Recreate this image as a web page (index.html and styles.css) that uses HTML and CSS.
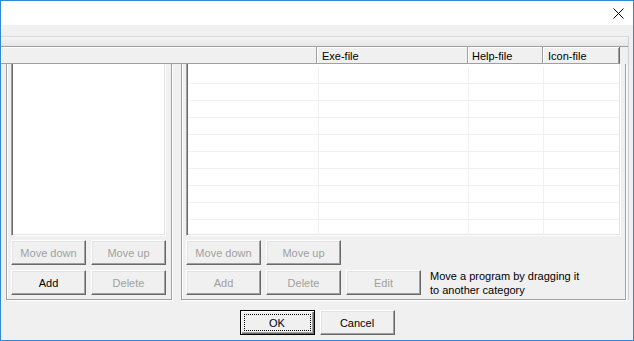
FILE: index.html
```html
<!DOCTYPE html>
<html lang="en">
<head>
  <meta charset="UTF-8" />
  <title>Programs</title>
  <link rel="stylesheet" href="styles.css">
</head>
<body>

<div class="window">
  <div class="titlebar">
    <svg class="close" viewBox="0 0 11 11" width="11" height="11">
      <path d="M0.5 0.5L10.5 10.5M10.5 0.5L0.5 10.5" stroke="#000" stroke-width="1" fill="none" />
    </svg>
  </div>

  <div class="client">
    <div class="frame">
      <div class="strip"></div>
      <div class="header">
        <div class="hcell c-name"></div>
        <div class="hcell c-exe">Exe-file</div>
        <div class="hcell c-help">Help-file</div>
        <div class="hcell c-icon">Icon-file</div>
      </div>

      <div class="panels">
        <div class="group group-left">
          <div class="listbox"></div>
          <div class="btn-grid">
            <button class="btn disabled">Move down</button>
            <button class="btn disabled">Move up</button>
            <button class="btn">Add</button>
            <button class="btn disabled">Delete</button>
          </div>
        </div>

        <div class="group group-right">
          <div class="listview">
            <div class="row"><div class="cell c1"></div><div class="cell c2"></div><div class="cell c3"></div><div class="cell c4"></div></div>
            <div class="row"><div class="cell c1"></div><div class="cell c2"></div><div class="cell c3"></div><div class="cell c4"></div></div>
            <div class="row"><div class="cell c1"></div><div class="cell c2"></div><div class="cell c3"></div><div class="cell c4"></div></div>
            <div class="row"><div class="cell c1"></div><div class="cell c2"></div><div class="cell c3"></div><div class="cell c4"></div></div>
            <div class="row"><div class="cell c1"></div><div class="cell c2"></div><div class="cell c3"></div><div class="cell c4"></div></div>
            <div class="row"><div class="cell c1"></div><div class="cell c2"></div><div class="cell c3"></div><div class="cell c4"></div></div>
            <div class="row"><div class="cell c1"></div><div class="cell c2"></div><div class="cell c3"></div><div class="cell c4"></div></div>
            <div class="row"><div class="cell c1"></div><div class="cell c2"></div><div class="cell c3"></div><div class="cell c4"></div></div>
            <div class="row"><div class="cell c1"></div><div class="cell c2"></div><div class="cell c3"></div><div class="cell c4"></div></div>
            <div class="row"><div class="cell c1"></div><div class="cell c2"></div><div class="cell c3"></div><div class="cell c4"></div></div>
          </div>
          <div class="btn-rows">
            <div class="btn-row">
              <button class="btn disabled">Move down</button>
              <button class="btn disabled">Move up</button>
            </div>
            <div class="btn-row">
              <button class="btn disabled">Add</button>
              <button class="btn disabled">Delete</button>
              <button class="btn disabled">Edit</button>
              <div class="hint">Move a program by dragging it<br>to another category</div>
            </div>
          </div>
        </div>
      </div>
    </div>

    <div class="footer">
      <button class="btn default"><span class="focus">OK</span></button>
      <button class="btn">Cancel</button>
    </div>
  </div>
</div>

</body>
</html>
```

FILE: styles.css
```css
body {
  margin: 0;
  font-family: 'Liberation Sans', Arial, sans-serif;
  font-size: 11px;
  background: #f0f0f0;
}
.window {
  width: 634px;
  height: 341px;
  box-sizing: border-box;
  border: 1px solid #2e8ad8;
  background: #f0f0f0;
  display: flex;
  flex-direction: column;
  overflow: hidden;
}
.titlebar {
  height: 24px;
  box-sizing: border-box;
  background: #fff;
  display: flex;
  justify-content: flex-end;
  padding: 7px 9px 0 0;
}
.close {
  display: block;
}
.client {
  flex: 1;
  display: flex;
  flex-direction: column;
}
.frame {
  margin-top: 11px;
  width: 628px;
  box-sizing: border-box;
  border-top: 1px solid #dadada;
  border-right: 1px solid #d0d0d0;
}
.strip {
  height: 9px;
  background: linear-gradient(#f4f4f4, #e6e6e6);
}
.header {
  display: flex;
  height: 18px;
  box-sizing: border-box;
  border-top: 1px solid #a0a0a0;
}
.hcell {
  height: 17px;
  box-sizing: border-box;
  background: #f0f0f0;
  border-right: 1px solid #a0a0a0;
  border-bottom: 1px solid #a0a0a0;
  box-shadow: inset 1px 1px #fff;
  padding: 2px 0 0 5px;
  line-height: 14px;
  color: #000;
}
.c-name { width: 316px; }
.c-exe { width: 151px; }
.c-help { width: 75px; padding-left: 4px; }
.c-icon {
  width: 77px;
  border-right-color: #696969;
  box-shadow: inset 1px 1px #fff, inset -1px 0 #a0a0a0;
}
.panels {
  display: flex;
}
.group {
  box-sizing: border-box;
  border: 1px solid #a0a0a0;
  border-top: none;
  box-shadow: 1px 1px 0 #fff, inset 1px 0 #fff;
}
.group-left {
  margin-left: 5px;
  width: 166px;
  padding: 0 5px 4px 4px;
}
.group-right {
  margin-left: 9px;
  width: 445px;
  padding: 0 4px 4px 4px;
}
.listbox,
.listview {
  height: 172px;
  box-sizing: border-box;
  background: #fff;
  border-left: 1px solid #a0a0a0;
  border-right: 1px solid #fff;
  border-bottom: 1px solid #fff;
  box-shadow: inset 1px 0 #696969, inset -1px -1px #e3e3e3;
}
.listview {
  padding: 3px 1px 1px 1px;
  overflow: hidden;
}
.row {
  display: flex;
  height: 17px;
  flex-shrink: 0;
  box-sizing: border-box;
  border-bottom: 1px solid #f0f0f0;
}
.cell {
  box-sizing: border-box;
  border-right: 1px solid #f0f0f0;
}
.c1 { width: 131px; }
.c2 { width: 150px; }
.c3 { width: 75px; }
.c4 { flex: 1; border-right: none; }
.btn-grid {
  display: grid;
  grid-template-columns: 75px 75px;
  gap: 5px;
  margin-top: 4px;
}
.btn-rows {
  display: flex;
  flex-direction: column;
  gap: 5px;
  margin-top: 4px;
}
.btn-row {
  display: flex;
  gap: 5px;
  align-items: flex-start;
}
.btn {
  width: 75px;
  height: 25px;
  margin: 0;
  padding: 0;
  box-sizing: border-box;
  font-family: inherit;
  font-size: 11px;
  color: #000;
  background: #f0f0f0;
  border: 1px solid;
  border-color: #fff #696969 #696969 #fff;
  box-shadow: inset -1px -1px #a0a0a0, inset 1px 1px #e3e3e3;
  display: flex;
  align-items: center;
  justify-content: center;
}
.btn.disabled {
  color: #a0a0a0;
}
.btn.default {
  border-color: #000;
  box-shadow: inset 1px 1px #fff, inset -1px -1px #696969, inset -2px -2px #a0a0a0;
  padding: 3px;
}
.focus {
  flex: 1;
  align-self: stretch;
  display: flex;
  align-items: center;
  justify-content: center;
  border: 1px dotted #000;
}
.hint {
  margin: -1px 0 -3px 4px;
  line-height: 14px;
  color: #000;
}
.footer {
  display: flex;
  justify-content: center;
  gap: 5px;
  margin-top: 10px;
}
```
